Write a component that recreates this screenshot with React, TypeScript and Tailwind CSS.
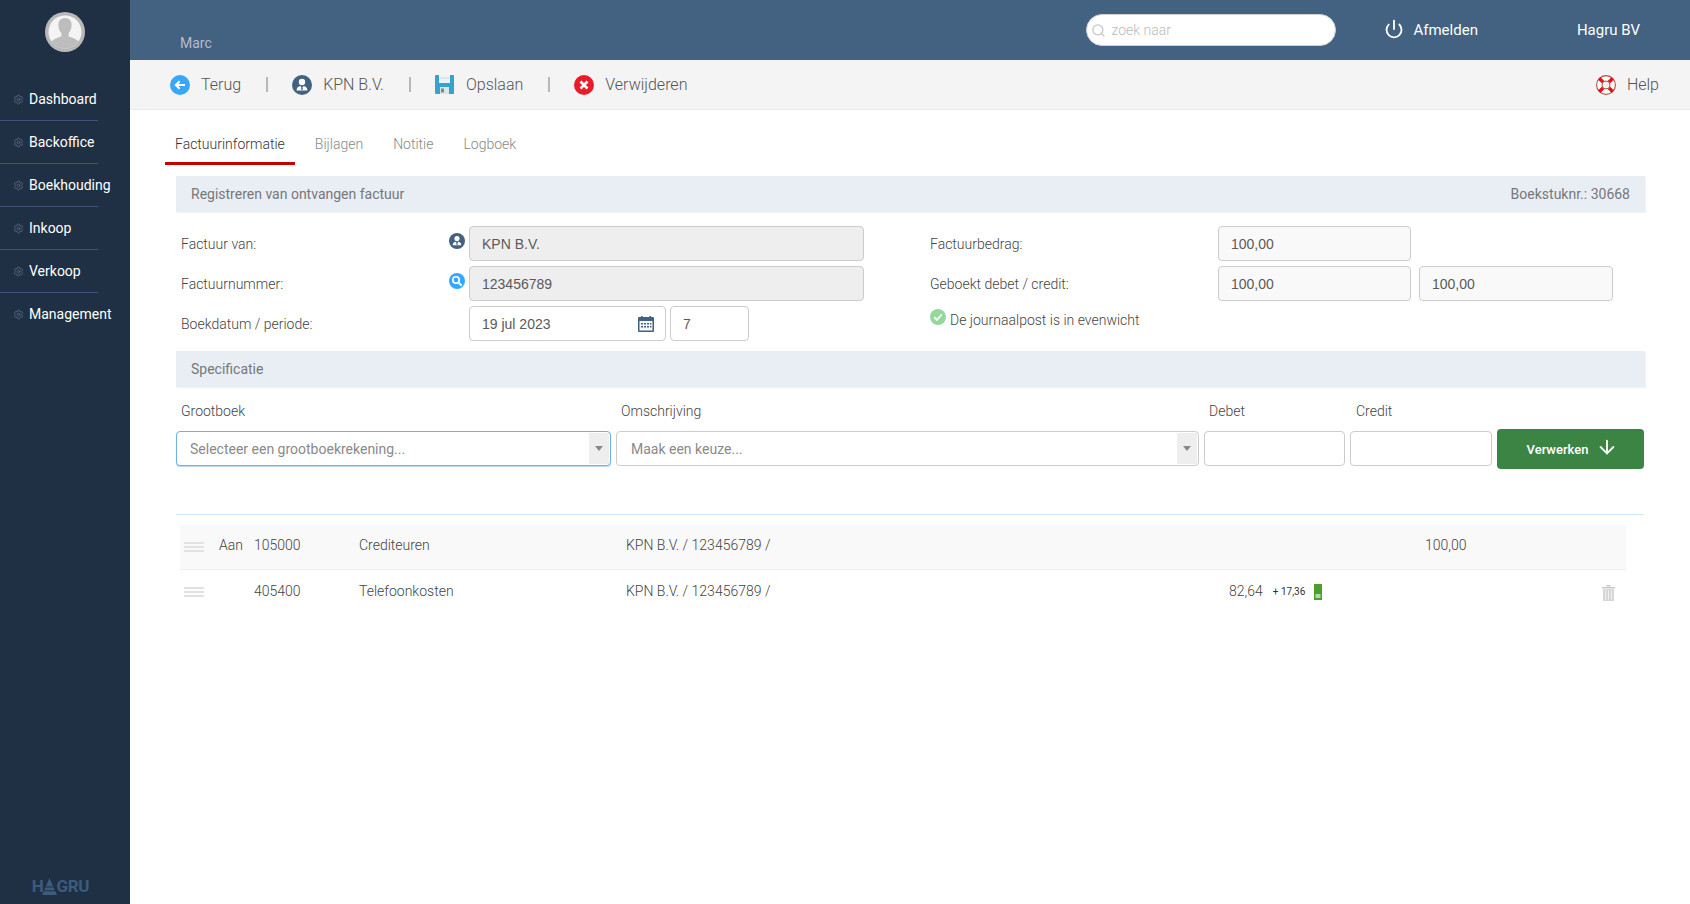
import {ArrowDown, Power, Search, Settings} from 'lucide-react';

const menu = ['Dashboard', 'Backoffice', 'Boekhouding', 'Inkoop', 'Verkoop', 'Management'];

function Avatar() {
  return (
    <svg width="40" height="40" viewBox="0 0 40 40">
      <circle cx="20" cy="20" r="20" fill="#b9b9b9" />
      <circle cx="20" cy="20" r="16.5" fill="#f4f4f4" />
      <clipPath id="avatar-clip">
        <circle cx="20" cy="20" r="16.5" />
      </clipPath>
      <g clipPath="url(#avatar-clip)" fill="#bdbdbd">
        <path d="M20 6c4.2 0 6.6 3 6.6 7 0 3.4-1.4 6.6-3 8v3.2c2.6 1.6 8 2.4 9.6 5.2L34 38H6l.8-8.6c1.6-2.8 7-3.6 9.6-5.2V21c-1.6-1.4-3-4.6-3-8 0-4 2.4-7 6.6-7z" />
      </g>
    </svg>
  );
}

function PersonIcon({size}: {size: number}) {
  return (
    <svg width={size} height={size} viewBox="0 0 20 20" className="shrink-0">
      <circle cx="10" cy="10" r="10" fill="#436180" />
      <circle cx="10" cy="7" r="3.2" fill="#fff" />
      <path d="M4.6 15.4c0-2.8 2-4.2 3.6-4.4L10 13l1.8-2c1.6.2 3.6 1.6 3.6 4.4z" fill="#fff" />
      <path d="M9.4 12.4h1.2l.3 2.4h-1.8z" fill="#436180" />
    </svg>
  );
}

function BackIcon() {
  return (
    <svg width="20" height="20" viewBox="0 0 20 20" className="shrink-0">
      <circle cx="10" cy="10" r="10" fill="#37a6fb" />
      <path d="M15 10H6M9.6 6.2 5.8 10l3.8 3.8" fill="none" stroke="#fff" strokeWidth="2" />
    </svg>
  );
}

function SaveIcon() {
  return (
    <svg width="19" height="19" viewBox="0 0 19 19" className="shrink-0">
      <path d="M0 1a1 1 0 0 1 1-1h17a1 1 0 0 1 1 1v18H1a1 1 0 0 1-1-1z" fill="#35a3cf" />
      <rect x="4" y="0" width="11" height="8" fill="#eef3f5" />
      <rect x="4" y="2.5" width="11" height="1" fill="#c9dde6" />
      <rect x="5" y="12" width="9" height="7" fill="#dfe4e6" />
      <rect x="6" y="13.5" width="3" height="4" fill="#7c8a90" />
    </svg>
  );
}

function DeleteIcon() {
  return (
    <svg width="20" height="20" viewBox="0 0 20 20" className="shrink-0">
      <circle cx="10" cy="10" r="10" fill="#e91c2b" />
      <path d="M6.5 6.5l7 7M13.5 6.5l-7 7" stroke="#fff" strokeWidth="2.6" />
    </svg>
  );
}

function HelpIcon() {
  return (
    <svg width="20" height="20" viewBox="0 0 20 20" className="shrink-0">
      <circle cx="10" cy="10" r="9.4" fill="#fff" stroke="#b0503c" strokeWidth="1.1" />
      <circle cx="10" cy="10" r="6.6" fill="none" stroke="#fff" strokeWidth="3" />
      <path d="M3.2 3.2l4 4M16.8 3.2l-4 4M3.2 16.8l4-4M16.8 16.8l-4-4" stroke="#e3141c" strokeWidth="3.4" />
      <circle cx="10" cy="10" r="4" fill="#f4f4f4" stroke="#b0503c" strokeWidth="1" />
    </svg>
  );
}

function SearchBadge() {
  return (
    <svg width="16" height="16" viewBox="0 0 16 16" className="shrink-0">
      <circle cx="8" cy="8" r="8" fill="#37a6fb" />
      <circle cx="7" cy="7" r="3.2" fill="none" stroke="#fff" strokeWidth="1.6" />
      <path d="M9.4 9.4l3.2 3.2" stroke="#fff" strokeWidth="2" />
    </svg>
  );
}

function CalendarIcon() {
  return (
    <svg width="16" height="16" viewBox="0 0 16 16" className="shrink-0">
      <rect x="0" y="1" width="16" height="15" rx="1" fill="#436180" />
      <rect x="3" y="0" width="1.6" height="3" fill="#436180" />
      <rect x="11.4" y="0" width="1.6" height="3" fill="#436180" />
      <rect x="1.5" y="5" width="13" height="9.5" fill="#f4f6f8" />
      <path d="M3 7h2v1.6H3zM6 7h2v1.6H6zM9 7h2v1.6H9zM12 7h1.4v1.6H12zM3 10h2v1.6H3zM6 10h2v1.6H6zM9 10h2v1.6H9zM12 10h1.4v1.6H12z" fill="#436180" />
    </svg>
  );
}

function CheckIcon() {
  return (
    <svg width="16" height="16" viewBox="0 0 16 16" className="-mt-[5px] shrink-0">
      <circle cx="8" cy="8" r="8" fill="#93d99c" />
      <path d="M4.2 8.2l2.7 2.7 4.9-5.4" fill="none" stroke="#fff" strokeWidth="1.8" />
    </svg>
  );
}

function TrashIcon() {
  return (
    <svg width="13" height="16" viewBox="0 0 13 16">
      <path d="M0 2h13v1.4H0zM4.4 0h4.2v1.6H4.4z" fill="#c9c9c9" />
      <path d="M1 4.2h11V16H1z" fill="#d6d6d6" />
      <path d="M3.6 5.6v9M6.5 5.6v9M9.4 5.6v9" stroke="#f2f2f2" strokeWidth="0.9" />
    </svg>
  );
}

function DragHandle({className = ''}: {className?: string}) {
  return (
    <div className={`ml-1 flex w-5 flex-col gap-[2px] ${className}`}>
      <div className="h-[2px] bg-[#e2e2e2]" />
      <div className="h-[2px] bg-[#e2e2e2]" />
      <div className="h-[2px] bg-[#e2e2e2]" />
    </div>
  );
}

function Separator() {
  return <div className="ml-[25px] mr-[24px] h-[15px] w-[2px] bg-[#b8b8b8]" />;
}

function Field({value, className}: {value?: string; className: string}) {
  return (
    <div className={`flex h-[35px] items-center rounded border border-[#cccccc] px-3 font-['Liberation_Sans',sans-serif] font-normal text-[#5a5a5a] ${className}`}>
      {value}
    </div>
  );
}

function SelectBox({placeholder, className}: {placeholder: string; className: string}) {
  return (
    <div className={`flex h-[35px] items-center justify-between rounded border bg-white pr-px font-normal text-[#8a8a8a] ${className}`}>
      <span>{placeholder}</span>
      <div className="flex h-[31px] w-[20px] items-center justify-center bg-[#eeeeee]">
        <div className="h-0 w-0 border-x-[4px] border-t-[5px] border-x-transparent border-t-[#888888]" />
      </div>
    </div>
  );
}

function SectionHeader({title, right}: {title: string; right?: string}) {
  return (
    <div className="flex h-9 items-center justify-between bg-[#e9eef5] px-[15px] font-normal text-[#777777] shadow-[1px_1px_1px_rgba(0,0,0,0.05)]">
      <span>{title}</span>
      {right && <span>{right}</span>}
    </div>
  );
}

export default function App() {
  return (
    <div className="flex h-screen overflow-hidden bg-white font-['Roboto',sans-serif] text-sm font-light text-[#444444]">

      {/* Sidebar */}
      <aside className="flex w-[130px] shrink-0 flex-col bg-[#1f3044] font-normal">
        <div className="flex h-[78px] justify-center pt-3">
          <Avatar />
        </div>
        {menu.map((item, i) => (
          <div
            key={item}
            className={`flex h-[43px] w-[98px] items-center whitespace-nowrap border-b text-white ${i < menu.length - 1 ? 'border-[#3b5878]' : 'border-transparent'}`}
          >
            <Settings size={11} className="ml-[13px] mr-[5px] shrink-0 text-[#54677c]" />
            {item}
          </div>
        ))}
        <div className="mt-auto mb-2 flex items-center justify-center pr-[9px] text-[17px] font-bold leading-5 tracking-[-0.3px] text-[#3d5b7c]">
          <span>H</span>
          <svg width="15" height="17" viewBox="0 0 14 16" className="-mx-px">
            <path d="M7 0l1 2.4L14 16H0L6 2.4z" fill="#3d5b7c" />
            <path d="M3.5 8.5h7M2 12h10" stroke="#1f3044" strokeWidth="1" />
          </svg>
          <span>GRU</span>
        </div>
      </aside>

      <div className="flex min-w-0 flex-1 flex-col">

        {/* Top bar */}
        <header className="flex h-[60px] shrink-0 items-center bg-[#436180] px-[50px] font-normal">
          <span className="mt-[26px] text-[#b4bdc8]">Marc</span>
          <div className="ml-auto flex h-8 w-[250px] items-center rounded-full border border-[#d0d0d0] bg-white pl-1 font-light text-[#bbbbbb]">
            <Search size={15} className="mr-[5px] text-[#c4c4c4]" />
            zoek naar
          </div>
          <Power size={20} strokeWidth={2.2} className="ml-[48px] -mt-[2px] text-white" />
          <span className="ml-[9px] mt-[2px] text-[15px] text-white">Afmelden</span>
          <span className="ml-[99px] mt-[2px] text-[15px] text-white">Hagru BV</span>
        </header>

        {/* Toolbar */}
        <div className="flex h-[50px] shrink-0 items-center border-b border-[#eaeaea] bg-[#f4f4f4] pl-10 pr-[31px] text-base text-[#555555]">
          <BackIcon />
          <span className="ml-[11px]">Terug</span>
          <Separator />
          <PersonIcon size={20} />
          <span className="ml-[11px]">KPN B.V.</span>
          <Separator />
          <SaveIcon />
          <span className="ml-[12px]">Opslaan</span>
          <Separator />
          <DeleteIcon />
          <span className="ml-[11px]">Verwijderen</span>
          <div className="ml-auto flex items-center gap-[11px]">
            <HelpIcon />
            <span>Help</span>
          </div>
        </div>

        <main className="w-[1514px] pl-[46px]">

          {/* Tabs */}
          <div className="-ml-[11px] flex h-[55px] items-end">
            <div className="flex h-[36px] items-start border-b-[3px] border-[#c40000] px-[10px] pt-[5px] text-[#333333]">Factuurinformatie</div>
            <div className="ml-[10px] flex h-[36px] items-start px-[10px] pt-[5px] text-[#888888]">Bijlagen</div>
            <div className="ml-[10px] flex h-[36px] items-start px-[10px] pt-[5px] text-[#888888]">Notitie</div>
            <div className="ml-[10px] flex h-[36px] items-start px-[10px] pt-[5px] text-[#888888]">Logboek</div>
          </div>

          <div className="mt-[11px] w-[1469px]">
            <SectionHeader title="Registreren van ontvangen factuur" right="Boekstuknr.: 30668" />
          </div>

          {/* Invoice form */}
          <div className="mt-[14px] grid w-[1469px] grid-cols-[688px_1fr] gap-x-[66px] gap-y-[5px]">
            <div className="flex h-[35px] items-center pl-[5px]">
              <span className="w-[268px]">Factuur van:</span>
              <div className="-mt-[5px] w-[20px]"><PersonIcon size={16} /></div>
              <Field value="KPN B.V." className="w-[395px] bg-[#eeeeee]" />
            </div>
            <div className="flex h-[35px] items-center">
              <span className="w-[288px]">Factuurbedrag:</span>
              <Field value="100,00" className="w-[193px] bg-[#f9f9f9]" />
            </div>

            <div className="flex h-[35px] items-center pl-[5px]">
              <span className="w-[268px]">Factuurnummer:</span>
              <div className="-mt-[5px] w-[20px]"><SearchBadge /></div>
              <Field value="123456789" className="w-[395px] bg-[#eeeeee]" />
            </div>
            <div className="flex h-[35px] items-center">
              <span className="w-[288px]">Geboekt debet / credit:</span>
              <Field value="100,00" className="w-[193px] bg-[#f9f9f9]" />
              <Field value="100,00" className="ml-2 w-[194px] bg-[#f9f9f9]" />
            </div>

            <div className="flex h-[35px] items-center pl-[5px]">
              <span className="w-[288px]">Boekdatum / periode:</span>
              <div className="flex h-[35px] w-[197px] items-center justify-between rounded border border-[#cccccc] pl-3 pr-[11px] font-['Liberation_Sans',sans-serif] font-normal text-[#5a5a5a]">
                19 jul 2023
                <CalendarIcon />
              </div>
              <Field value="7" className="ml-[4px] w-[79px]" />
            </div>
            <div className="-mt-[4px] flex h-[35px] items-center gap-[4px]">
              <CheckIcon />
              De journaalpost is in evenwicht
            </div>
          </div>

          <div className="mt-[10px] w-[1469px]">
            <SectionHeader title="Specificatie" />
          </div>

          {/* Specification entry */}
          <div className="flex h-[42px] items-start pt-[14px] leading-5">
            <span className="ml-[5px] w-[440px]">Grootboek</span>
            <span className="w-[588px]">Omschrijving</span>
            <span className="w-[147px]">Debet</span>
            <span>Credit</span>
          </div>
          <div className="flex h-10 items-start">
            <SelectBox
              placeholder="Selecteer een grootboekrekening..."
              className="mt-[2px] w-[435px] border-[#6fb1e0] pl-[13px] shadow-[0_1px_1px_rgba(111,177,224,0.5)]"
            />
            <SelectBox placeholder="Maak een keuze..." className="ml-[5px] mt-[2px] w-[583px] border-[#cccccc] pl-[14px]" />
            <Field className="ml-[5px] mt-[2px] w-[141px]" />
            <Field className="ml-[5px] mt-[2px] w-[142px]" />
            <button className="ml-[5px] flex h-10 w-[147px] items-center justify-center gap-[8px] rounded bg-[#3b8444] pl-1 text-[13px] font-medium text-white">
              <span className="mt-[2px]">Verwerken</span>
              <ArrowDown size={22} className="-mt-[5px]" />
            </button>
          </div>

          <div className="mt-[45px] w-[1468px] border-t border-[#cde8fb]" />

          {/* Journal lines */}
          <div className="ml-1 mt-[10px] w-[1446px]">
            <div className="grid h-[45px] grid-cols-[39px_35px_105px_267px_603px_196px_177px] items-center border-b border-[#eeeeee] bg-[#f9f9f9] pb-1">
              <DragHandle className="mt-1" />
              <span>Aan</span>
              <span>105000</span>
              <span>Crediteuren</span>
              <span>KPN B.V. / 123456789 /</span>
              <span />
              <span>100,00</span>
            </div>
            <div className="grid h-[42px] grid-cols-[39px_35px_105px_267px_603px_196px_177px_24px] items-center">
              <DragHandle className="mt-[2px]" />
              <span />
              <span>405400</span>
              <span>Telefoonkosten</span>
              <span>KPN B.V. / 123456789 /</span>
              <div className="flex items-center">
                <span>82,64</span>
                <span className="ml-[10px] mt-[3px] text-[10px] font-normal text-[#333333]">+ 17,36</span>
                <svg width="8" height="16" viewBox="0 0 8 16" className="ml-[9px] mt-px">
                  <rect width="8" height="16" fill="#4c9f2a" />
                  <rect x="1.5" y="10" width="5" height="4" fill="#b5d9a5" />
                </svg>
              </div>
              <span />
              <div className="flex pt-[3px]"><TrashIcon /></div>
            </div>
          </div>
        </main>
      </div>
    </div>
  );
}
